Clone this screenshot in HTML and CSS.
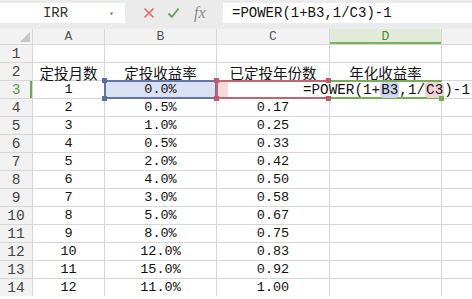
FILE: index.html
```html
<!DOCTYPE html>
<html>
<head>
    <title>定投收益率</title>
<link rel="stylesheet" href="styles.css">
</head>
<body>
    <div class="formula-bar">
        <div class="name-box"><span class="name">IRR</span><span class="drop">&#9662;</span></div>
        <div class="fx-tools">
            <svg class="tool" width="12" height="12" viewBox="0 0 12 12"><path d="M1.5 1.5 L10.5 10.5 M10.5 1.5 L1.5 10.5" stroke="#e06a6a" stroke-width="1.6" fill="none"/></svg>
            <svg class="tool" width="13" height="12" viewBox="0 0 13 12"><path d="M1.5 6.5 L5 10 L11.5 1.5" stroke="#5aa55a" stroke-width="1.8" fill="none"/></svg>
            <span class="fx">fx</span>
        </div>
        <div class="formula-input">=POWER(1+B3,1/C3)-1</div>
    </div>

    <div class="sheet">
        <div class="corner"></div>
        <div class="col-head">A</div>
        <div class="col-head">B</div>
        <div class="col-head">C</div>
        <div class="col-head active">D</div>
        <div class="col-head"></div>

        <div class="row-head">1</div>
        <div class="cell"></div><div class="cell"></div><div class="cell"></div><div class="cell"></div><div class="cell"></div>

        <div class="row-head">2</div>
        <div class="cell cn">定投月数</div>
        <div class="cell cn">定投收益率</div>
        <div class="cell cn">已定投年份数</div>
        <div class="cell cn">年化收益率</div>
        <div class="cell"></div>

        <div class="row-head active">3</div>
        <div class="cell">1</div>
        <div class="cell ref-b">0.0%</div>
        <div class="cell ref-c"></div>
        <div class="cell editing">
            <div class="editor">=POWER(1+<span class="hl-b">B3</span>,1/<span class="hl-c">C3</span>)-1</div>
        </div>
        <div class="cell"></div>

        <div class="row-head">4</div>
        <div class="cell">2</div><div class="cell">0.5%</div><div class="cell">0.17</div><div class="cell"></div><div class="cell"></div>
        <div class="row-head">5</div>
        <div class="cell">3</div><div class="cell">1.0%</div><div class="cell">0.25</div><div class="cell"></div><div class="cell"></div>
        <div class="row-head">6</div>
        <div class="cell">4</div><div class="cell">0.5%</div><div class="cell">0.33</div><div class="cell"></div><div class="cell"></div>
        <div class="row-head">7</div>
        <div class="cell">5</div><div class="cell">2.0%</div><div class="cell">0.42</div><div class="cell"></div><div class="cell"></div>
        <div class="row-head">8</div>
        <div class="cell">6</div><div class="cell">4.0%</div><div class="cell">0.50</div><div class="cell"></div><div class="cell"></div>
        <div class="row-head">9</div>
        <div class="cell">7</div><div class="cell">3.0%</div><div class="cell">0.58</div><div class="cell"></div><div class="cell"></div>
        <div class="row-head">10</div>
        <div class="cell">8</div><div class="cell">5.0%</div><div class="cell">0.67</div><div class="cell"></div><div class="cell"></div>
        <div class="row-head">11</div>
        <div class="cell">9</div><div class="cell">8.0%</div><div class="cell">0.75</div><div class="cell"></div><div class="cell"></div>
        <div class="row-head">12</div>
        <div class="cell">10</div><div class="cell">12.0%</div><div class="cell">0.83</div><div class="cell"></div><div class="cell"></div>
        <div class="row-head">13</div>
        <div class="cell">11</div><div class="cell">15.0%</div><div class="cell">0.92</div><div class="cell"></div><div class="cell"></div>
        <div class="row-head">14</div>
        <div class="cell">12</div><div class="cell">11.0%</div><div class="cell">1.00</div><div class="cell"></div><div class="cell"></div>
    </div>
</body>
</html>
```

FILE: styles.css
```css
body {
  margin: 0;
  background: #ffffff;
  font-family: "Liberation Mono", "Noto Sans CJK SC", monospace;
  color: #111;
  overflow: hidden;
}

/* formula bar */
.formula-bar {
  display: flex;
  height: 29px;
  box-sizing: border-box;
  padding: 3px 0 6px;
  background: #ebebeb;
}

.name-box {
  display: flex;
  align-items: center;
  width: 125px;
  background: #fff;
}

.name {
  flex: 1;
  text-align: center;
  padding-left: 2px;
  font-size: 14px;
  color: #333;
}

.drop {
  width: 16px;
  font-size: 8px;
  color: #777;
}

.fx-tools {
  display: flex;
  align-items: center;
  gap: 12px;
  width: 98px;
  padding-left: 18px;
  box-sizing: border-box;
}

.fx {
  font-family: "Liberation Serif", serif;
  font-style: italic;
  font-size: 16px;
  color: #8a8a8a;
  margin-left: 2px;
}

.formula-input {
  flex: 1;
  display: flex;
  align-items: center;
  padding-left: 9px;
  background: #fff;
  font-size: 14px;
}

/* sheet grid */
.sheet {
  display: grid;
  grid-template-columns: 32px 71px 111px 112px 111px 1fr;
  grid-template-rows: 15px repeat(14, 17px);
  gap: 1px;
  background: #d6d6d6;
}

.corner,
.col-head,
.row-head {
  display: flex;
  align-items: center;
  justify-content: center;
  background: #f2f2f2;
  color: #555;
  font-size: 13px;
}

.corner {
  position: relative;
}

.corner::after {
  content: "";
  position: absolute;
  right: 2px;
  bottom: 2px;
  border-style: solid;
  border-width: 0 0 10px 10px;
  border-color: transparent transparent #c6c6c6 transparent;
}

.col-head.active {
  background: #e1ebd7;
  color: #4f8a33;
  box-shadow: inset 0 -2px 0 #7ab25a;
}

.row-head {
  font-size: 14.5px;
  color: #444;
}

.row-head.active {
  color: #5b9a3a;
  box-shadow: inset -2px 0 0 #6ca84c;
}

.cell {
  display: flex;
  align-items: center;
  justify-content: center;
  background: #fff;
  font-size: 13.5px;
  position: relative;
}

.cn {
  font-family: "Noto Sans CJK SC", sans-serif;
  font-size: 14.5px;
  padding-top: 1px;
}

/* formula references */
.ref-b {
  background: #dae1f3;
  outline: 2px solid #6374a8;
  outline-offset: -1px;
}

.ref-c {
  background: #f6dadd;
  outline: 2px solid #c2636d;
  outline-offset: -1px;
}

.ref-b::before,
.ref-b::after,
.ref-c::before,
.ref-c::after {
  content: "";
  position: absolute;
  left: -3px;
  width: 5px;
  height: 5px;
  z-index: 3;
}

.ref-b::before { top: -3px; background: #5a6ca4; }
.ref-b::after { bottom: -3px; background: #5a6ca4; }

.ref-c::before {
  top: -3px;
  background: #c25a66;
  box-shadow: 112px 0 0 #c25a66;
}

.ref-c::after {
  bottom: -3px;
  background: #c25a66;
  box-shadow: 112px 0 0 #c25a66;
}

.editing {
  outline: 2px solid #77ad55;
  outline-offset: -1px;
}

.editing::after {
  content: "";
  position: absolute;
  right: -3px;
  bottom: -3px;
  width: 5px;
  height: 5px;
  background: #77ad55;
  z-index: 3;
}

.editor {
  position: absolute;
  top: 1px;
  bottom: 1px;
  left: -102px;
  right: -31px;
  z-index: 2;
  display: flex;
  align-items: center;
  justify-content: flex-end;
  padding-right: 2px;
  background: #fff;
  font-size: 14.3px;
}

.hl-b {
  background: #cdd6ee;
  border-radius: 4px;
  padding: 0 1px;
}

.hl-c {
  background: #f0d3d6;
  border-radius: 4px;
  padding: 0 1px;
}
```
